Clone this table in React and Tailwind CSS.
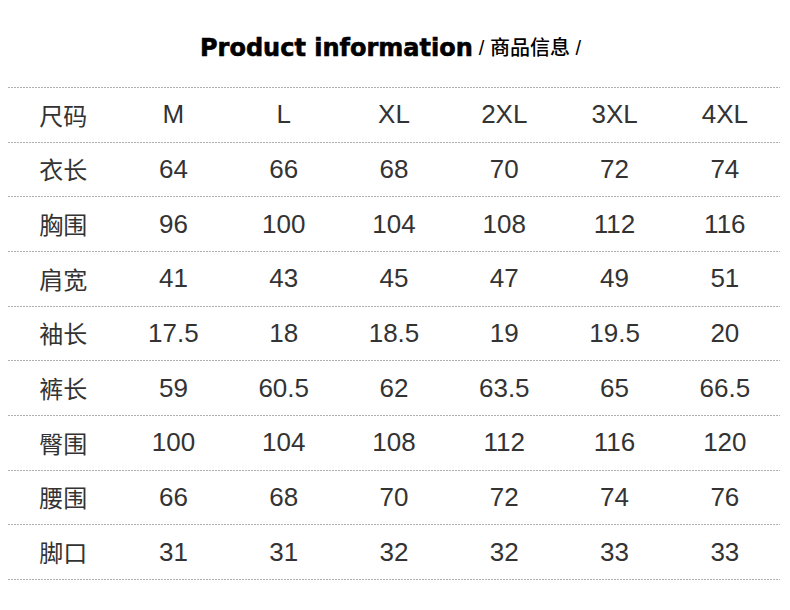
const header = ["尺码", "M", "L", "XL", "2XL", "3XL", "4XL"];

const rows = [
  ["衣长", "64", "66", "68", "70", "72", "74"],
  ["胸围", "96", "100", "104", "108", "112", "116"],
  ["肩宽", "41", "43", "45", "47", "49", "51"],
  ["袖长", "17.5", "18", "18.5", "19", "19.5", "20"],
  ["裤长", "59", "60.5", "62", "63.5", "65", "66.5"],
  ["臀围", "100", "104", "108", "112", "116", "120"],
  ["腰围", "66", "68", "70", "72", "74", "76"],
  ["脚口", "31", "31", "32", "32", "33", "33"]
];

const Line = () => (
  <div className="h-px w-full bg-[repeating-linear-gradient(to_right,#b0b0b0_0_2px,transparent_2px_3px)]" />
);

const Row = ({ cells }) => (
  <>
    <div className="grid h-[53.67px] grid-cols-7 items-center">
      {cells.map((cell, i) => (
        <div
          key={i}
          className={
            i === 0
              ? "text-center text-[24px] text-[#333] [font-family:'Noto_Sans_CJK_SC',sans-serif]"
              : "text-center text-[26px] text-[#333] [font-family:'Liberation_Sans',Arial,sans-serif]"
          }
        >
          {cell}
        </div>
      ))}
    </div>
    <Line />
  </>
);

export default function App() {
  return (
    <div className="h-[610px] w-[790px] bg-white">
      <div className="flex h-[87px] items-center justify-center pt-[8px] pr-[9px]">
        <span className="text-[24px] font-bold text-black [-webkit-text-stroke:0.6px_black] [font-family:'DejaVu_Sans',sans-serif]">
          Product information
        </span>
        <span className="ml-[6px] text-[20px] font-medium text-black [font-family:'Liberation_Sans','Noto_Sans_CJK_SC',sans-serif]">
          / 商品信息 /
        </span>
      </div>
      <div className="mx-[8px] w-[772px]">
        <Line />
        <Row cells={header} />
        {rows.map((r) => (
          <Row key={r[0]} cells={r} />
        ))}
      </div>
    </div>
  );
}
